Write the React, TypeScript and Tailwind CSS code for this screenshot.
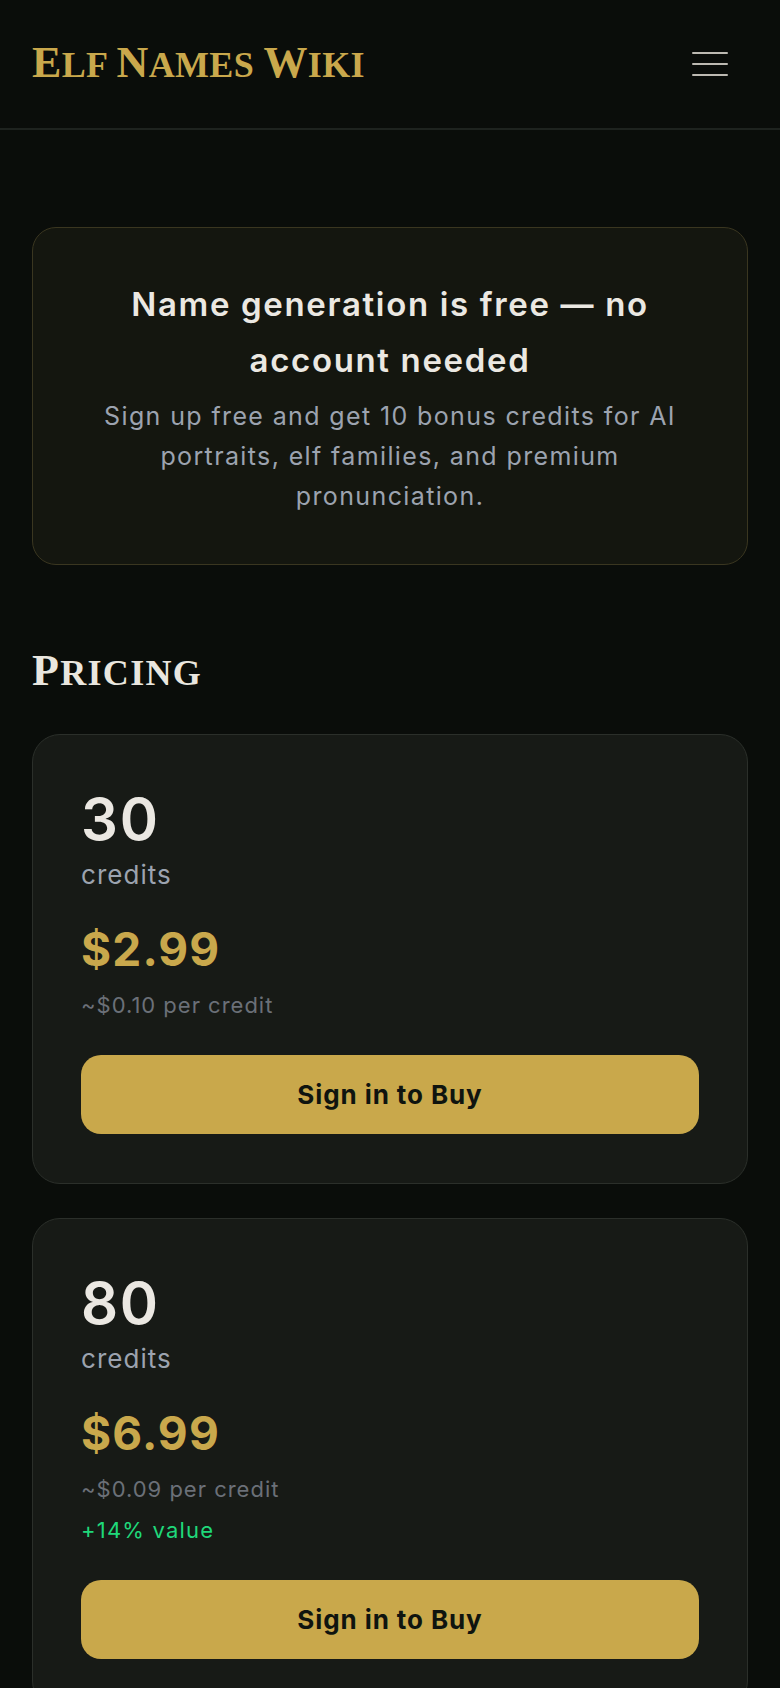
export default function App() {
  const packs = [
    { credits: "30", price: "$2.99", per: "~$0.10 per credit", bonus: "" },
    { credits: "80", price: "$6.99", per: "~$0.09 per credit", bonus: "+14% value" },
  ];

  return (
    <div className="min-h-screen bg-[#0a0d0a] font-['Inter','Noto_Sans',sans-serif] text-[#ebe8e2]">
      {/* Header */}
      <header className="h-[130px] border-b-2 border-[#1e231f] bg-[#0a0d0a] px-8 flex items-center justify-between">
        <div className="font-['Liberation_Serif',serif] font-bold text-[36px] text-[#c9a84c] leading-none tracking-[0.01em] pb-[3px]">
          <span className="text-[44px]">E</span>
          <span>LF</span>{" "}
          <span className="text-[44px]">N</span>
          <span>AMES</span>{" "}
          <span className="text-[44px]">W</span>
          <span>IKI</span>
        </div>
        <button className="w-[78px] h-[64px] flex flex-col items-center justify-center gap-[8.5px] -mr-[1px]">
          <span className="block w-[36px] h-[2.5px] rounded-full bg-[#bdbab2]" />
          <span className="block w-[36px] h-[2.5px] rounded-full bg-[#bdbab2]" />
          <span className="block w-[36px] h-[2.5px] rounded-full bg-[#bdbab2]" />
        </button>
      </header>

      <main className="px-8 pt-[97px] pb-16">
        {/* Free notice */}
        <div className="rounded-3xl border border-[#3a3620] bg-[#14160f] p-12 text-center">
          <h2 className="text-[33px] leading-[56px] font-semibold tracking-[0.05em] text-[#ebe8e2]">
            Name generation is free — no account needed
          </h2>
          <p className="mt-2 text-[25px] leading-[40px] tracking-[0.055em] text-[#9ca3af]">
            Sign up free and get 10 bonus credits for AI portraits, elf families, and premium pronunciation.
          </p>
        </div>

        {/* Pricing */}
        <h2 className="mt-20 font-['Liberation_Serif',serif] font-bold text-[44px] text-[#e9e6df] leading-[52px] tracking-[0.03em]">
          <span>P</span>
          <span className="text-[36px]">RICING</span>
        </h2>

        <div className="mt-[35px] flex flex-col gap-[34px]">
          {packs.map((p) => (
            <div key={p.credits} className="rounded-[28px] border border-[#2b2f2a] bg-[#171a16] px-12 pt-12 pb-[49px]">
              <div className="text-[58px] leading-[72px] font-semibold tracking-[0.03em] text-[#ebe8e2]">{p.credits}</div>
              <div className="mt-1 text-[26px] leading-[32px] tracking-[0.04em] text-[#9ca3af]">credits</div>
              <div className="mt-[30px] text-[46px] leading-[56px] font-bold tracking-[0.025em] text-[#c9a84c]">{p.price}</div>
              <div className="mt-3 text-[22px] leading-[32px] tracking-[0.045em] text-[#6b7078]">{p.per}</div>
              {p.bonus && (
                <div className="mt-[9px] text-[22px] leading-[32px] tracking-[0.055em] text-[#1fd87a]">{p.bonus}</div>
              )}
              <button className="mt-[34px] w-full h-[79px] rounded-[20px] bg-[#c9a84b] text-[26px] font-bold tracking-[0.035em] text-[#0f140f]">
                Sign in to Buy
              </button>
            </div>
          ))}
        </div>
      </main>
    </div>
  );
}
